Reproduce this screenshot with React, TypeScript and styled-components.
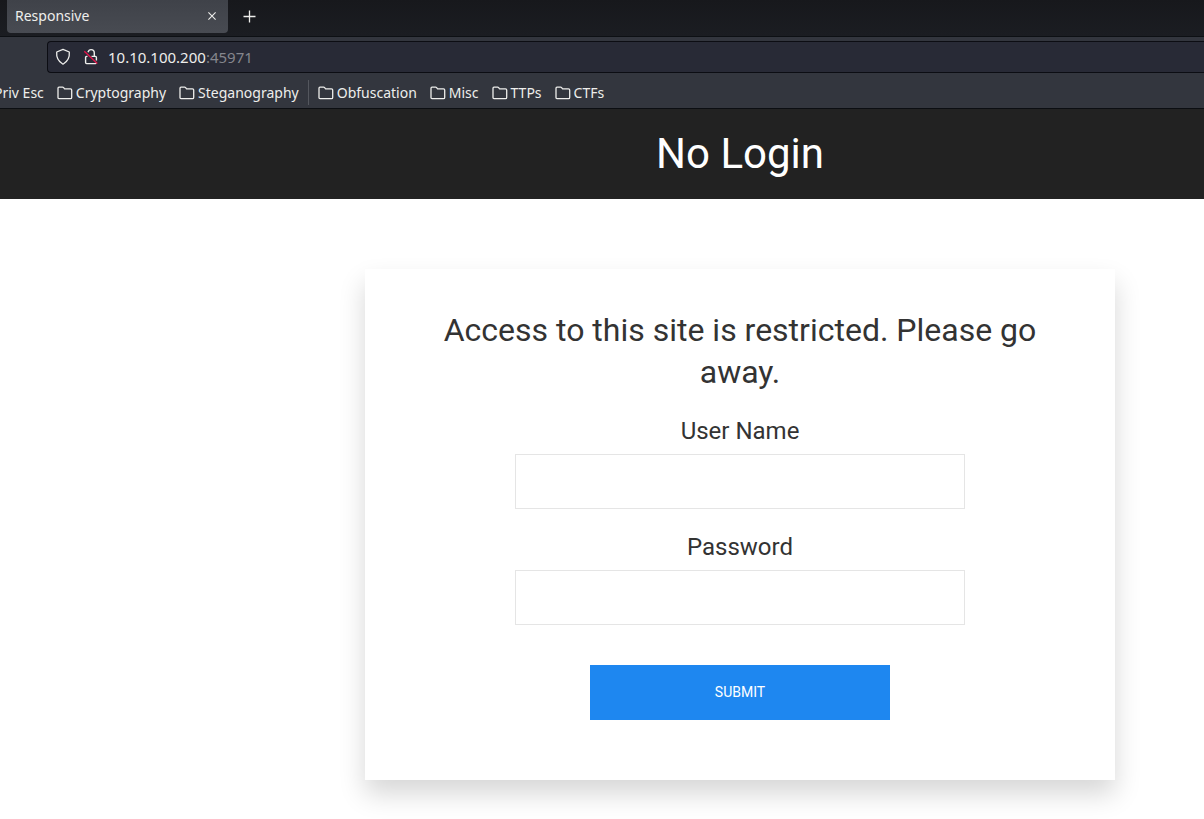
import React from "react";
import styled, { createGlobalStyle } from "styled-components";

const Global = createGlobalStyle`
  *, *::before, *::after { box-sizing: border-box; }
  body { margin: 0; background: #fff; overflow-x: hidden; }
  button, input { font: inherit; }
`;

const Chrome = styled.div`
  background: #33363e;
  color: #eeeeec;
  font-family: "Noto Sans", sans-serif;
  font-size: 14px;
  line-height: 20px;
  border-bottom: 1px solid #0c0e12;
  overflow: hidden;
`;

const TabStrip = styled.div`
  display: flex;
  align-items: flex-start;
  height: 37px;
  padding-left: 7px;
  background: linear-gradient(#17181c, #1b1d22);
  border-bottom: 1px solid #0d1014;
`;

const Tab = styled.div`
  display: flex;
  align-items: center;
  justify-content: space-between;
  width: 221px;
  height: 33px;
  padding: 0 8px 2px;
  background: linear-gradient(#3f4249, #484b52);
  border-radius: 0 0 4px 4px;
`;

const IconButton = styled.button<{ $size: number }>`
  display: flex;
  align-items: center;
  justify-content: center;
  width: ${(p) => p.$size}px;
  height: ${(p) => p.$size}px;
  padding: 0;
  border: 0;
  background: none;
  color: inherit;
`;

const NewTab = styled(IconButton)`
  margin-left: 5px;
`;

const AddressBar = styled.div`
  display: flex;
  align-items: center;
  height: 32px;
  margin: 4px 0 0 47px;
  padding-left: 7px;
  background: #282a36;
  border: 1px solid #0c0d13;
  border-right: 0;
  border-radius: 4px 0 0 4px;
`;

const Address = styled.div`
  margin-left: 9px;
  font-size: 15px;
`;

const Port = styled.span`
  color: #85868d;
`;

const SecurityIcons = styled.div`
  display: flex;
  gap: 12px;
`;

const Bookmarks = styled.nav`
  display: flex;
  align-items: center;
  gap: 13px;
  height: 35px;
  padding-top: 4px;
  margin-left: -6px;
  white-space: nowrap;
`;

const Bookmark = styled.a`
  display: flex;
  align-items: center;
  gap: 3px;
  color: inherit;
  text-decoration: none;
`;

const Separator = styled.div`
  width: 1px;
  height: 25px;
  margin: 0 -4px;
  background: #54575e;
`;

const Banner = styled.header`
  padding: 20px 0 20px 276px;
  background: #222;
  color: #fff;
  font-family: Roboto, sans-serif;
  text-align: center;
`;

const SiteTitle = styled.h1`
  margin: 0;
  font-size: 42px;
  font-weight: 400;
  line-height: 50px;
`;

const Page = styled.main`
  padding: 70px 0 39px 276px;
  color: #333;
  font-family: Roboto, sans-serif;
`;

const Card = styled.form`
  display: flex;
  flex-direction: column;
  align-items: center;
  max-width: 750px;
  margin: 0 auto;
  padding: 40px 75px 60px;
  background: #fff;
  box-shadow: 0 14px 25px rgba(0, 0, 0, 0.16);
  text-align: center;
`;

const Notice = styled.h2`
  margin: 0;
  font-size: 32px;
  font-weight: 400;
  line-height: 42px;
`;

const Field = styled.label`
  display: flex;
  flex-direction: column;
  gap: 7px;
  width: 75%;
  margin-top: 22px;
  font-size: 24px;
  line-height: 32px;
`;

const TextInput = styled.input`
  width: 100%;
  height: 55px;
  padding: 0 16px;
  border: 1px solid #e5e5e5;
  border-radius: 0;
  background: #fff;
`;

const Submit = styled.button`
  width: 50%;
  height: 55px;
  margin-top: 40px;
  padding: 0 16px 2px;
  border: 0;
  background: #1e87f0;
  color: #fff;
  font-size: 14px;
  text-transform: uppercase;
`;

const Folder = () => (
  <svg width="16" height="16" viewBox="0 0 16 16" fill="none" stroke="currentColor" strokeWidth="1.3" strokeLinejoin="round" aria-hidden>
    <path d="M1 12.8V3.2q0-1 1-1h3.6q.6 0 1 .5l1 1.2h5.9q1.2 0 1.2 1.2v7.3q0 1.2-1.2 1.2H2q-1 0-1-.8z" />
  </svg>
);

const Shield = () => (
  <svg width="16" height="18" viewBox="0 0 16 18" fill="none" stroke="currentColor" strokeWidth="1.3" strokeLinejoin="round" aria-hidden>
    <path d="M8 1.4 14.3 4c.3 3.2-.2 8.7-6.3 12.2C1.9 12.7 1.4 7.2 1.7 4z" />
  </svg>
);

const BrokenLock = () => (
  <svg width="16" height="18" viewBox="0 0 16 18" fill="none" aria-hidden>
    <path d="M5 4.2C5.6 2.300 6.700 1.6 8 1.6c2 0 3.3 1.3 3.3 3.4v3M4.5 8.400H3.600q-1 0-1 1v5.200q0 1 1 1h8.800q1 0 1-1M8.500 8.400h4q.9 0 .9 1v3" stroke="currentColor" strokeWidth="1.4" />
    <path d="M1.3 3.3 14.3 15.4" stroke="#e2144a" strokeWidth="1.4" />
  </svg>
);

const Cross = () => (
  <svg width="8" height="8" viewBox="0 0 8 8" stroke="currentColor" strokeWidth="1.1" aria-hidden>
    <path d="M.4.4l7.2 7.2M7.6.4L.4 7.600" />
  </svg>
);

const Plus = () => (
  <svg width="13" height="13" viewBox="0 0 13 13" stroke="currentColor" strokeWidth="1.3" aria-hidden>
    <path d="M6.5.5v12M.5 6.5h12" />
  </svg>
);

const folders = ["Cryptography", "Steganography", "|", "Obfuscation", "Misc", "TTPs", "CTFs"];

export default function App() {
  return (
    <>
      <Global />
      <Chrome>
        <TabStrip>
          <Tab>
            <span>Responsive</span>
            <IconButton $size={16} type="button" aria-label="Close tab">
              <Cross />
            </IconButton>
          </Tab>
          <NewTab $size={32} type="button" aria-label="New tab">
            <Plus />
          </NewTab>
        </TabStrip>
        <AddressBar>
          <SecurityIcons>
            <Shield />
            <BrokenLock />
          </SecurityIcons>
          <Address>
            10.10.100.200<Port>:45971</Port>
          </Address>
        </AddressBar>
        <Bookmarks>
          <Bookmark href="#">Priv Esc</Bookmark>
          {folders.map((name) =>
            name === "|" ? (
              <Separator key={name} />
            ) : (
              <Bookmark key={name} href="#">
                <Folder />
                {name}
              </Bookmark>
            )
          )}
        </Bookmarks>
      </Chrome>
      <Banner>
        <SiteTitle>No Login</SiteTitle>
      </Banner>
      <Page>
        <Card onSubmit={(e) => e.preventDefault()}>
          <Notice>Access to this site is restricted. Please go away.</Notice>
          <Field>
            User Name
            <TextInput type="text" name="username" />
          </Field>
          <Field>
            Password
            <TextInput type="password" name="password" />
          </Field>
          <Submit type="submit">Submit</Submit>
        </Card>
      </Page>
    </>
  );
}
